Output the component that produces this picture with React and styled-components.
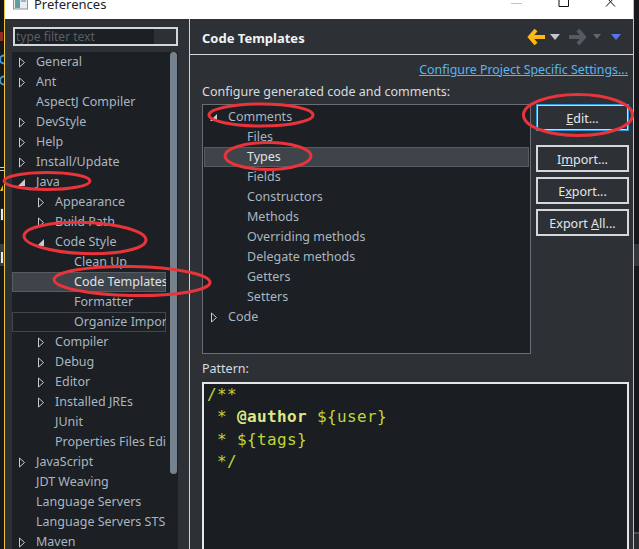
import styled, { createGlobalStyle } from 'styled-components';

const GlobalStyle = createGlobalStyle`
  html, body {
    margin: 0;
    padding: 0;
    background: #16181b;
  }
  * {
    box-sizing: border-box;
  }
`;

const sideRows = [
  { label: 'General', level: 0, arrow: 'closed' },
  { label: 'Ant', level: 0, arrow: 'closed' },
  { label: 'AspectJ Compiler', level: 0 },
  { label: 'DevStyle', level: 0, arrow: 'closed' },
  { label: 'Help', level: 0, arrow: 'closed' },
  { label: 'Install/Update', level: 0, arrow: 'closed' },
  { label: 'Java', level: 0, arrow: 'open' },
  { label: 'Appearance', level: 1, arrow: 'closed' },
  { label: 'Build Path', level: 1, arrow: 'closed' },
  { label: 'Code Style', level: 1, arrow: 'open' },
  { label: 'Clean Up', level: 2 },
  { label: 'Code Templates', level: 2, selected: true },
  { label: 'Formatter', level: 2 },
  { label: 'Organize Imports', level: 2, outlined: true },
  { label: 'Compiler', level: 1, arrow: 'closed' },
  { label: 'Debug', level: 1, arrow: 'closed' },
  { label: 'Editor', level: 1, arrow: 'closed' },
  { label: 'Installed JREs', level: 1, arrow: 'closed' },
  { label: 'JUnit', level: 1 },
  { label: 'Properties Files Editor', level: 1 },
  { label: 'JavaScript', level: 0, arrow: 'closed' },
  { label: 'JDT Weaving', level: 0 },
  { label: 'Language Servers', level: 0 },
  { label: 'Language Servers STS', level: 0 },
  { label: 'Maven', level: 0, arrow: 'closed' },
];

const templateRows = [
  { label: 'Comments', level: 0, arrow: 'open' },
  { label: 'Files', level: 1 },
  { label: 'Types', level: 1, selected: true },
  { label: 'Fields', level: 1 },
  { label: 'Constructors', level: 1 },
  { label: 'Methods', level: 1 },
  { label: 'Overriding methods', level: 1 },
  { label: 'Delegate methods', level: 1 },
  { label: 'Getters', level: 1 },
  { label: 'Setters', level: 1 },
  { label: 'Code', level: 0, arrow: 'closed' },
];

const TreeArrow = ({ type }) => {
  if (type === 'open') {
    return (
      <ArrowBox viewBox="0 0 9 9">
        <path d="M8 1V8H1Z" fill="#c8ccd0" />
      </ArrowBox>
    );
  }
  if (type === 'closed') {
    return (
      <ArrowBox viewBox="0 0 9 11">
        <path d="M2.5 1V10L7.5 5.5Z" fill="none" stroke="#c8ccd0" strokeWidth="1" />
      </ArrowBox>
    );
  }
  return <ArrowBox as="span" />;
};

const TreeRows = ({ rows, base, step }) =>
  rows.map(row => (
    <Row
      key={row.label}
      $indent={base + row.level * step}
      $selected={row.selected}
      $outlined={row.outlined}
    >
      <TreeArrow type={row.arrow} />
      <RowLabel $selected={row.selected}>{row.label}</RowLabel>
    </Row>
  ));

const App = () => (
  <>
    <GlobalStyle />
    <Screen>
      <EdgeStrip>
        <svg width="4" height="549" viewBox="0 0 4 549">
          <rect x="0" y="32" width="3" height="9" fill="#8f2f28" />
          <path d="M4 55.5A4 4 0 0 0 4 63.5" fill="none" stroke="#3f9bd8" strokeWidth="2" />
          <path d="M4 76.5A4 4 0 0 0 4 84.5" fill="none" stroke="#3f9bd8" strokeWidth="2" />
          <rect x="0" y="167" width="4" height="1" fill="#c8ccd0" />
          <rect x="0" y="170" width="4" height="1" fill="#c8ccd0" />
          <path d="M0 191L3 185V191Z" fill="#e8b820" />
          <rect x="0" y="208" width="4" height="13" fill="#26292d" />
          <rect x="1" y="209" width="2" height="11" fill="#e8e8e8" />
          <rect x="0" y="244" width="4" height="22" fill="#3a3d41" />
          <rect x="1" y="252" width="2" height="11" fill="#e8e8e8" />
        </svg>
      </EdgeStrip>

      <Window>
        <TitleBar>
          <AppIcon viewBox="0 0 15 12">
            <rect x="0.5" y="0" width="14" height="11" fill="#e8edf0" stroke="#8a9298" />
            <rect x="2" y="1" width="5" height="9" fill="#5f9ea0" />
            <rect x="8" y="1" width="5" height="3" fill="#9fb4c0" />
          </AppIcon>
          <TitleText>Preferences</TitleText>
          <WindowControls>
            <svg width="12" height="6" viewBox="0 0 12 6">
              <rect x="0" y="3" width="11" height="1" fill="#c4c4c4" />
            </svg>
            <svg width="12" height="8" viewBox="0 0 12 8">
              <path d="M1 -4H10.5V6.5H1Z" fill="none" stroke="#111" />
            </svg>
            <svg width="12" height="8" viewBox="0 0 12 8">
              <path d="M1 -3L10 6.5M10 -3L1 6.5" fill="none" stroke="#111" />
            </svg>
          </WindowControls>
        </TitleBar>

        <Body>
          <Sidebar>
            <Filter>
              <FilterText>type filter text</FilterText>
            </Filter>
            <SideTree>
              <SideList>
                <TreeRows rows={sideRows} base={4} step={19} />
              </SideList>
              <ScrollTrack>
                <ScrollThumb />
              </ScrollTrack>
            </SideTree>
          </Sidebar>

          <Main>
            <Header>
              <HeaderTitle>Code Templates</HeaderTitle>
              <HeaderTools>
                <NavArrow viewBox="0 0 19 18">
                  <path d="M9 2L3 9L9 16M4 9H18" fill="none" stroke="#fdb90f" strokeWidth="4" />
                </NavArrow>
                <Caret viewBox="0 0 10 6" width="10" height="6" $gap={4}>
                  <path d="M0 0H10L5 6Z" fill="#c3c7cb" />
                </Caret>
                <NavArrow viewBox="0 0 19 18" $gap={8}>
                  <path d="M10 2L16 9L10 16M15 9H1" fill="none" stroke="#575b61" strokeWidth="4" />
                </NavArrow>
                <Caret viewBox="0 0 8 5" width="8" height="5" $gap={6}>
                  <path d="M0 0H8L4 5Z" fill="#63676c" />
                </Caret>
                <Caret viewBox="0 0 10 6" width="10" height="6" $gap={10}>
                  <path d="M0 0H10L5 6Z" fill="#5a73f0" />
                </Caret>
              </HeaderTools>
            </Header>

            <Content>
              <ProjectLink>Configure Project Specific Settings...</ProjectLink>
              <FieldLabel>Configure generated code and comments:</FieldLabel>

              <TemplatePane>
                <TemplateTree>
                  <TreeRows rows={templateRows} base={4} step={19} />
                </TemplateTree>
                <ButtonColumn>
                  <ActionButton $focused><u>E</u>dit...</ActionButton>
                  <ActionButton $top={9}>I<u>m</u>port...</ActionButton>
                  <ActionButton>E<u>x</u>port...</ActionButton>
                  <ActionButton>Export <u>A</u>ll...</ActionButton>
                </ButtonColumn>
              </TemplatePane>

              <PatternLabel>Pattern:</PatternLabel>
              <PatternBox>
                <CodeLine>/**</CodeLine>
                <CodeLine>{' * '}<Tag>@author</Tag>{' ${user}'}</CodeLine>
                <CodeLine>{' * ${tags}'}</CodeLine>
                <CodeLine>{' */'}</CodeLine>
              </PatternBox>
            </Content>
          </Main>
        </Body>
      </Window>

      <RightStrip />

      <Marks viewBox="0 0 639 549" width="639" height="549">
        <g fill="none" stroke="#e8343a" strokeWidth="3">
          <ellipse cx="47" cy="181" rx="43" ry="8.5" />
          <ellipse cx="85" cy="238" rx="61" ry="15.5" transform="rotate(2 85 238)" />
          <ellipse cx="132" cy="281" rx="78" ry="14.5" transform="rotate(1 132 281)" />
          <ellipse cx="261" cy="115" rx="52" ry="11" />
          <ellipse cx="268" cy="156" rx="43" ry="13.5" />
          <ellipse cx="578" cy="115" rx="54.5" ry="20.5" />
        </g>
      </Marks>
    </Screen>
  </>
);

export default App;

const Screen = styled.div`
  display: flex;
  position: relative;

  width: 639px;
  height: 549px;
  overflow: hidden;

  background: #16181b;
  font-family: 'Noto Sans', 'Liberation Sans', sans-serif;
  font-size: 13px;
`;

const EdgeStrip = styled.div`
  flex: 0 0 4px;
  line-height: 0;
`;

const RightStrip = styled.div`
  flex: 0 0 5px;
  background: linear-gradient(
    #16181b 0 244px,
    #34373b 244px 266px,
    #16181b 266px 532px,
    #4a4d50 532px 534px,
    #2a2c30 534px
  );
`;

const Window = styled.div`
  display: flex;
  flex-direction: column;
  flex: 1;
  min-width: 0;

  border-left: 1px solid #e8c840;
  border-right: 1px solid #e8c840;
  background: #2d3136;
`;

const TitleBar = styled.div`
  display: flex;
  align-items: flex-start;
  flex: 0 0 19px;

  padding-left: 8px;
  overflow: hidden;
  background: #fff;
`;

const AppIcon = styled.svg`
  width: 15px;
  height: 12px;
  margin-top: -2px;
`;

const TitleText = styled.span`
  margin: -5px 0 0 6px;

  color: #222;
  font-size: 13px;
  line-height: 18px;
`;

const WindowControls = styled.div`
  display: flex;
  align-items: flex-start;

  margin-left: auto;
  padding-right: 16px;
  gap: 35px;
`;

const Body = styled.div`
  display: flex;
  flex: 1;
  min-height: 0;
`;

const Sidebar = styled.div`
  display: flex;
  flex-direction: column;
  flex: 0 0 183px;

  padding: 8px 11px 0 7px;
  gap: 6px;
`;

const Filter = styled.div`
  flex: 0 0 19px;
  margin-left: 1px;
  padding-left: 1px;

  border: 2px solid #d4d7da;
  background: linear-gradient(90deg, #1c1f23 0 139px, #2d3136 139px);
`;

const FilterText = styled.div`
  color: #5a5e63;
  font-size: 12px;
  line-height: 15px;
`;

const SideTree = styled.div`
  display: flex;
  flex: 1;
  min-height: 0;

  background: #1c1f23;
`;

const SideList = styled.div`
  flex: 0 0 154px;
  overflow: hidden;
`;

const ScrollTrack = styled.div`
  flex: 1;
  padding: 0 1px 0 4px;
  background: #1c1f23;
`;

const ScrollThumb = styled.div`
  width: 7px;
  height: 422px;
  border-radius: 4px;
  background: #76838e;
`;

const Row = styled.div`
  display: flex;
  align-items: center;

  height: 20px;
  padding-left: ${({ $indent }) => $indent}px;
  white-space: nowrap;

  border: 1px solid
    ${({ $selected, $outlined }) => ($selected ? '#575c62' : $outlined ? '#43474c' : 'transparent')};
  background: ${({ $selected }) => ($selected ? '#3f444a' : 'transparent')};
`;

const ArrowBox = styled.svg`
  display: block;
  flex: 0 0 9px;
  width: 9px;
  height: 11px;
  margin-right: 10px;
`;

const RowLabel = styled.span`
  color: ${({ $selected }) => ($selected ? '#dfe3e7' : '#a9b6c1')};
  font-size: 12.5px;
  line-height: 18px;
`;

const Main = styled.div`
  display: flex;
  flex-direction: column;
  flex: 1;
  min-width: 0;

  border-left: 1px solid #cfd2d5;
`;

const Header = styled.div`
  display: flex;
  align-items: center;
  justify-content: space-between;
  flex: 0 0 36px;

  padding: 0 12px 0 12px;
  border-bottom: 1px solid #d6d8da;
`;

const HeaderTitle = styled.h2`
  margin: 2px 0 0;

  color: #f2f3f4;
  font-size: 13px;
  font-weight: 700;
`;

const HeaderTools = styled.div`
  display: flex;
  align-items: center;
  margin-left: 1px;
`;

const NavArrow = styled.svg`
  width: 19px;
  height: 18px;
  margin-left: ${({ $gap }) => $gap || 0}px;
`;

const Caret = styled.svg`
  margin-left: ${({ $gap }) => $gap}px;
`;

const Content = styled.div`
  display: flex;
  flex-direction: column;
  flex: 1;
  min-height: 0;

  padding: 6px 4px 0 12px;
`;

const ProjectLink = styled.a`
  align-self: flex-end;
  margin-right: 1px;

  color: #5ab4ee;
  font-size: 12.4px;
  line-height: 18px;
  text-decoration: underline;
`;

const FieldLabel = styled.div`
  margin-top: 4px;

  color: #d8dcdf;
  font-size: 12.5px;
  line-height: 18px;
`;

const TemplatePane = styled.div`
  display: flex;
  align-items: flex-start;
  margin-top: 3px;
  gap: 5px;
`;

const TemplateTree = styled.div`
  flex: 0 0 329px;
  height: 250px;
  padding: 2px 1px 1px;

  border: 1px solid #6a6e74;
  background: #1c1f23;
`;

const ButtonColumn = styled.div`
  display: flex;
  flex-direction: column;
  flex: 1;
  gap: 5px;
`;

const ActionButton = styled.button`
  height: 27px;
  margin-top: ${({ $top }) => $top || 0}px;
  padding: 2px 0 0;

  color: #e4e7ea;
  font-family: inherit;
  font-size: 12.5px;

  border: 2px solid #d5d8db;
  outline: ${({ $focused }) => ($focused ? '1px solid #2f9be6' : 'none')};
  outline-offset: -1px;
  background: #2d3136;
`;

const PatternLabel = styled.div`
  margin-top: 6px;

  color: #d8dcdf;
  font-size: 12.5px;
  line-height: 18px;
`;

const PatternBox = styled.div`
  flex: 1;
  margin-top: 4px;
  padding: 0 3px;

  border: 2px solid #e4e6e8;
  border-bottom: 0;
  background: #1a1d21;
`;

const CodeLine = styled.div`
  color: #bdd63a;
  font-family: 'DejaVu Sans Mono', 'Liberation Mono', monospace;
  font-size: 16px;
  letter-spacing: 0.37px;
  line-height: 22.4px;
  white-space: pre;
`;

const Tag = styled.b`
  color: #dfe88a;
`;

const Marks = styled.svg`
  position: absolute;
  top: 0;
  left: 0;
  pointer-events: none;
`;
